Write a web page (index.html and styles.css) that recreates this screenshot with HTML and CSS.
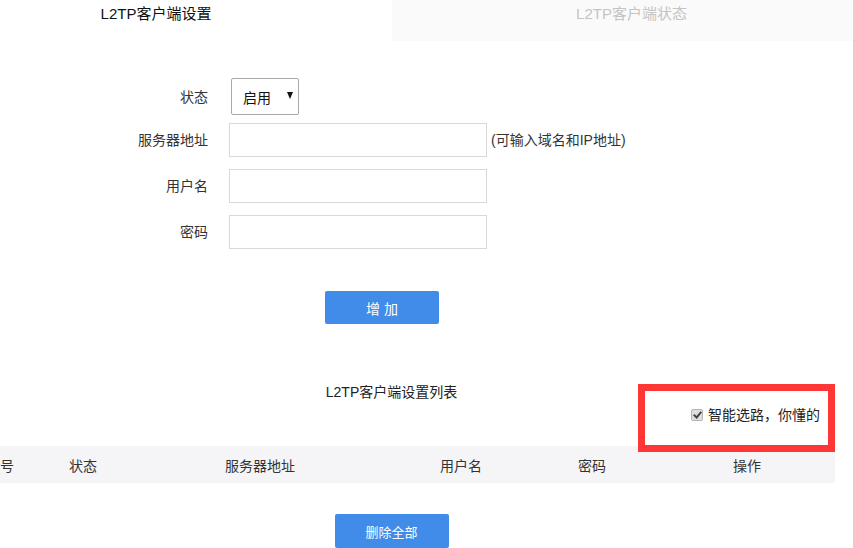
FILE: index.html
```html
<!DOCTYPE html>
<html lang="zh-CN">
<head>
    <meta charset="UTF-8">
    <meta name="viewport" content="width=device-width, initial-scale=1.0">
    <title>L2TP客户端设置</title>
    <link rel="stylesheet" href="styles.css">
</head>
<body>
    <div class="tabs">
        <div class="tab active">L2TP客户端设置</div>
        <div class="tab">L2TP客户端状态</div>
    </div>

    <div class="form">
        <div class="row row-select">
            <label>状态</label>
            <div class="select">
                <span>启用</span>
                <i class="arrow"></i>
            </div>
        </div>
        <div class="row">
            <label>服务器地址</label>
            <input type="text">
            <span class="hint">(可输入域名和IP地址)</span>
        </div>
        <div class="row">
            <label>用户名</label>
            <input type="text">
        </div>
        <div class="row">
            <label>密码</label>
            <input type="password">
        </div>
    </div>

    <button class="btn btn-add">增 加</button>

    <div class="list-title">L2TP客户端设置列表</div>

    <div class="smart">
        <span class="check"></span>
        <span>智能选路，你懂的</span>
    </div>

    <div class="table-head">
        <div>序号</div>
        <div>状态</div>
        <div>服务器地址</div>
        <div>用户名</div>
        <div>密码</div>
        <div>操作</div>
    </div>

    <div class="center">
        <button class="btn btn-del">删除全部</button>
    </div>

    <!-- 标注框 -->
    <div class="mark"></div>
</body>
</html>
```

FILE: styles.css
```css
body {
    margin: 0;
    width: 853px;
    height: 548px;
    overflow: hidden;
    position: relative;
    background: #fff;
    color: #333;
    font-family: 'Liberation Sans', 'Noto Sans CJK SC', sans-serif;
    font-size: 14px;
}

.tabs {
    display: flex;
    height: 41px;
}

.tab {
    box-sizing: border-box;
    flex: 1;
    text-align: center;
    padding-top: 4px;
    padding-left: 18px;
    line-height: 20px;
    font-size: 15px;
    color: #c4c4c4;
    background: #fafafa;
}

.tab.active {
    flex: none;
    width: 392px;
    padding-left: 0;
    padding-right: 80px;
    color: #111;
    background: #fff;
}

.form {
    margin-top: 37px;
}

.row {
    display: flex;
    align-items: center;
    margin-bottom: 12px;
}

.row:last-child {
    margin-bottom: 0;
}

.row-select {
    margin-bottom: 8px;
}

.row label {
    width: 208px;
    margin-right: 21px;
    text-align: right;
    line-height: 20px;
}

.select {
    box-sizing: border-box;
    display: flex;
    align-items: center;
    justify-content: space-between;
    width: 68px;
    height: 37px;
    margin-left: 2px;
    padding: 0 5px 0 11px;
    border: 1px solid #a9a9a9;
    border-radius: 2px;
    color: #111;
}

.arrow {
    width: 0;
    height: 0;
    border-left: 3.5px solid transparent;
    border-right: 3.5px solid transparent;
    border-top: 7px solid #111;
    margin-top: -3px;
}

.row input {
    box-sizing: border-box;
    width: 258px;
    height: 34px;
    margin: 0;
    border: 1px solid #d9d9d9;
    border-radius: 0;
    outline: none;
}

.hint {
    margin-left: 4px;
    line-height: 20px;
}

.btn {
    display: block;
    border: none;
    border-radius: 2px;
    background: #418ce9;
    color: #fff;
    font-family: inherit;
    cursor: pointer;
}

.btn-add {
    width: 114px;
    height: 33px;
    margin: 42px 0 0 325px;
    font-size: 14px;
}

.list-title {
    width: 783px;
    margin-top: 58px;
    text-align: center;
    line-height: 20px;
    color: #222;
}

.smart {
    display: flex;
    align-items: center;
    justify-content: flex-end;
    width: 820px;
    margin-top: 3px;
    line-height: 20px;
    color: #222;
}

.check {
    box-sizing: border-box;
    position: relative;
    width: 12px;
    height: 12px;
    margin-right: 5px;
    border: 1px solid #b4b4b4;
    border-radius: 2px;
    background: #dedede;
}

.check::after {
    content: '';
    position: absolute;
    left: 3px;
    top: 0;
    width: 3px;
    height: 6px;
    border-right: 2px solid #444;
    border-bottom: 2px solid #444;
    transform: rotate(40deg);
}

.table-head {
    display: grid;
    grid-template-columns: 100px 66px 288px 114px 148px 162px 1fr;
    width: 885px;
    height: 37px;
    margin: 21px 0 0 -50px;
    align-items: center;
    text-align: center;
    background: #f5f5f7;
}

.center {
    width: 783px;
    margin-top: 31px;
}

.btn-del {
    width: 114px;
    height: 34px;
    margin: 0 auto;
    font-size: 13px;
}

.mark {
    position: absolute;
    left: 638px;
    top: 384px;
    width: 183px;
    height: 54px;
    border: 7px solid #ff3636;
}
```
